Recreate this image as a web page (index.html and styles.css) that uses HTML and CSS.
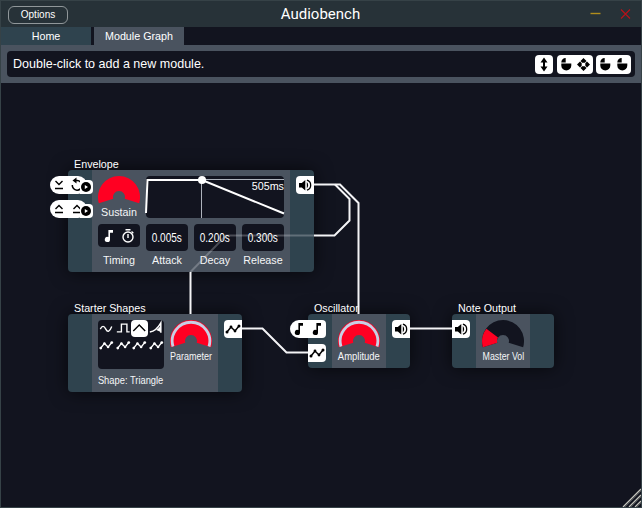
FILE: index.html
```html
<!DOCTYPE html>
<html lang="en">
<head>
<meta charset="utf-8">
<title>Audiobench</title>
<link rel="stylesheet" href="styles.css">
</head>
<body>
<svg class="defs" width="0" height="0">
  <defs>
    <symbol id="speaker" viewBox="0 0 18 18"><path d="M3 7h2.800L9.300 4v10.500L5.800 11.500H3z"/><path d="M10.800 6q2.800 3.200 0 6.400z"/><path d="M10.900 4.200a5.200 5.200 0 0 1 0 10" fill="none" stroke="currentColor" stroke-width="1.300"/></symbol>
    <symbol id="wave" viewBox="0 0 18 18"><path d="M3 12l4-5 4 4 4-5" fill="none" stroke="currentColor" stroke-width="1.500"/><circle cx="3" cy="12" r="1.500"/><circle cx="7" cy="7" r="1.400"/><circle cx="11" cy="11" r="1.400"/><circle cx="15" cy="6" r="1.500"/></symbol>
    <symbol id="note" viewBox="0 0 18 18"><path d="M8.400 3H13v2.700h-3v6.800a2.600 2.600 0 1 1-1.600-2.400z"/></symbol>
    <symbol id="mouse" viewBox="0 0 18 18"><path d="M4.300 8.500h10v2a5 5 0 0 1-10 0zM8.700 3v4.500H4.300A4.400 4.400 0 0 1 8.700 3z"/></symbol>
    <symbol id="play" viewBox="0 0 10 10"><circle cx="5" cy="5" r="5"/><path d="M3.800 2.900L7 5 3.800 7.100z" fill="#fff"/></symbol>
  </defs>
</svg>
<div class="window">
  <header class="titlebar">
    <button class="options">Options</button>
    <h1>Audiobench</h1>
    <svg class="controls" width="44" height="14" viewBox="0 0 44 14"><path d="M1.500 6.500h10" stroke="#b08d1c" stroke-width="1.400"/><path d="M32 2.500l9 9m0-9l-9 9" stroke="#b81219" stroke-width="1.100"/></svg>
  </header>
  <nav class="tabs"><div class="tab home">Home</div><div class="tab active">Module Graph</div></nav>
  <div class="hintbar">
    <div class="hint">
      <span>Double-click to add a new module.</span>
      <div class="keys">
        <div class="key"><svg width="18" height="19" viewBox="0 0 18 19"><path d="M9 2.500l3.500 5H10v4h2.500L9 16.500l-3.500-5H8v-4H5.500z"/></svg></div>
        <div class="key"><svg width="18" height="18"><use href="#mouse"/></svg><svg width="18" height="19" viewBox="0 0 18 19"><path d="M8.500 3l3 3-1.700 1.700H7.200L5.500 6zM8.500 16l3-3-1.700-1.700H7.200L5.500 13zM2 9.500l3-3 1.700 1.700v2.600L5 12.500zM15 9.500l-3-3-1.700 1.700v2.600l1.700 1.700z"/></svg></div>
        <div class="key"><svg width="17" height="18" viewBox="0 0 17 18"><use href="#mouse" width="18" height="18"/></svg><svg width="18" height="18"><use href="#mouse"/></svg></div>
      </div>
    </div>
  </div>
  <main class="canvas">
    <section class="node envelope">
      <h2>Envelope</h2>
      <div class="side"></div>
      <div class="body">
        <div class="top">
          <div class="control">
            <svg class="knob" width="42" height="28" viewBox="0 0 42 28"><path class="red" d="M.9 27.200A21 21 0 1 1 41.100 27.200L26.700 22.800A6 6 0 1 0 15.300 22.800z"/></svg>
            <span class="label">Sustain</span>
          </div>
          <div class="graph">
            <svg width="138" height="42" viewBox="0 0 138 42"><path d="M56 3.500h82M55.500 4v38" stroke="#aeb3bc"/><path d="M0 37L1.500 4H56l82 33.500" fill="none" stroke="#fff" stroke-width="2"/><circle cx="56" cy="4" r="4" fill="#fff"/></svg>
            <span class="duration">505ms</span>
          </div>
        </div>
        <div class="fields">
          <div class="field"><div class="box timing"><svg width="18" height="18"><use href="#note"/></svg><svg width="18" height="18" viewBox="0 0 18 18"><circle cx="9" cy="10" r="5" fill="none" stroke="currentColor" stroke-width="1.400"/><path d="M6.500 2h5v1.500h-5zM8.300 7h1.400v4H8.300zM13 4l1.800 1.700-1 1-1.700-1.700z"/></svg></div><span class="label">Timing</span></div>
          <div class="field"><div class="box"><span class="value">0.005s</span></div><span class="label">Attack</span></div>
          <div class="field"><div class="box"><span class="value">0.200s</span></div><span class="label">Decay</span></div>
          <div class="field"><div class="box"><span class="value">0.300s</span></div><span class="label">Release</span></div>
        </div>
      </div>
      <div class="side"><div class="port out"><svg width="18" height="18"><use href="#speaker"/></svg></div></div>
      <div class="inlet first">
        <svg width="18" height="18" viewBox="0 0 18 18"><path d="M5.500 5l3.500 3.500L12.500 5M5 12.500h8" fill="none" stroke="currentColor" stroke-width="1.400"/></svg>
        <svg width="18" height="18" viewBox="0 0 18 18"><path d="M4.300 9a4.800 4.800 0 1 0 4.700-4.400H7" fill="none" stroke="currentColor" stroke-width="1.500"/><path d="M4.500 4.600L8.500 1.600v6z"/></svg>
        <div class="trigger"><svg width="10" height="10"><use href="#play"/></svg></div>
      </div>
      <div class="inlet second">
        <svg width="18" height="18" viewBox="0 0 18 18"><path d="M5.500 9L9 5.500 12.500 9M5 12.500h8" fill="none" stroke="currentColor" stroke-width="1.400"/></svg>
        <svg width="18" height="18" viewBox="0 0 18 18"><path d="M5.500 9L9 5.500 12.500 9M5 12.500h8" fill="none" stroke="currentColor" stroke-width="1.400"/></svg>
        <div class="trigger"><svg width="10" height="10"><use href="#play"/></svg></div>
      </div>
    </section>

    <section class="node shapes">
      <h2>Starter Shapes</h2>
      <div class="side"></div>
      <div class="body row">
        <div class="picker-wrap">
          <div class="picker">
            <svg viewBox="0 0 18 18"><path d="M2.500 10q3-6 6 0t6.500-3" fill="none" stroke="currentColor" stroke-width="1.500"/></svg>
            <svg viewBox="0 0 18 18"><path d="M2 13h5V4.500h6V13h3" fill="none" stroke="currentColor" stroke-width="1.500"/></svg>
            <svg class="chosen" viewBox="0 0 18 18"><path d="M2.500 12L9 5.500l6.500 6.500" fill="none" stroke="currentColor" stroke-width="1.500"/></svg>
            <svg viewBox="0 0 18 18"><path d="M2 13.200q7-1 12-10V14" fill="none" stroke="currentColor" stroke-width="1.600"/><path d="M9 11q3-2 5-5v7z"/></svg>
            <svg viewBox="0 0 18 18"><use href="#wave"/></svg><svg viewBox="0 0 18 18"><use href="#wave"/></svg><svg viewBox="0 0 18 18"><use href="#wave"/></svg><svg viewBox="0 0 18 18"><use href="#wave"/></svg>
          </div>
          <span class="label caption">Shape: Triangle</span>
        </div>
        <div class="control">
          <svg class="knob" width="42" height="28" viewBox="0 0 42 28"><path class="red" d="M.9 27.200A21 21 0 1 1 41.100 27.200L26.700 22.800A6 6 0 1 0 15.300 22.800z"/><path class="arc" d="M3 26.500A18.800 18.800 0 1 1 39 26.500"/></svg>
          <span class="label parameter">Parameter</span>
        </div>
      </div>
      <div class="side"><div class="port out"><svg width="18" height="18"><use href="#wave"/></svg></div></div>
    </section>

    <section class="node oscillator">
      <h2>Oscillator</h2>
      <div class="side inputs">
        <div class="port notes"><svg width="18" height="18"><use href="#note"/></svg><svg width="18" height="18"><use href="#note"/></svg></div>
        <div class="port in"><svg width="18" height="18"><use href="#wave"/></svg></div>
      </div>
      <div class="body">
        <div class="control">
          <svg class="knob" width="42" height="28" viewBox="0 0 42 28"><path class="red" d="M.9 27.200A21 21 0 1 1 41.100 27.200L26.700 22.800A6 6 0 1 0 15.300 22.800z"/><path class="arc" d="M3 26.500A18.800 18.800 0 1 1 39 26.500"/></svg>
          <span class="label amplitude">Amplitude</span>
        </div>
      </div>
      <div class="side"><div class="port out"><svg width="18" height="18"><use href="#speaker"/></svg></div></div>
    </section>

    <section class="node output">
      <h2>Note Output</h2>
      <div class="side"><div class="port in"><svg width="18" height="18"><use href="#speaker"/></svg></div></div>
      <div class="body">
        <div class="control">
          <svg class="knob" width="42" height="28" viewBox="0 0 42 28"><path class="track" d="M.9 27.200A21 21 0 1 1 41.100 27.200L26.700 22.800A6 6 0 1 0 15.300 22.800z"/><path class="red" d="M.9 27.200A21 21 0 0 1 4.400 8.700L16 17.500A6 6 0 0 0 15.300 22.800z"/></svg>
          <span class="label volume">Master Vol</span>
        </div>
      </div>
      <div class="side"></div>
    </section>

    <svg class="wires" width="640" height="424" viewBox="1 83 640 424">
      <path d="M314 184.500H340L358.500 203V314"/>
      <path d="M335 184.500L349.500 199V220.500L334.500 235.500H314"/>
      <path class="faint" d="M314 235.500H226L190.500 272"/>
      <path d="M190.500 272V314"/>
      <path d="M242 328.500H262.500L286.500 352.500H308"/>
      <path d="M410 328.500H452"/>
    </svg>
    <svg class="grip" width="19" height="19" viewBox="0 0 19 19"><path d="M1 19L19 1M7 19L19 7M13 19l6-6" stroke="#c5c5be" stroke-width="1.300"/><path d="M3 19L19 3M9 19L19 9M15 19l4-4" stroke="#4a4d50" stroke-width="1"/></svg>
  </main>
</div>
</body>
</html>
```
FILE: styles.css
```css
* { box-sizing: border-box; }
body {
  margin: 0;
  background: #12141f;
  color: #fff;
  font: 10.74px/12px "Liberation Sans", Arial, sans-serif;
}
svg { display: block; flex: none; fill: currentColor; }
.defs { position: absolute; }
.window {
  width: 642px;
  height: 508px;
  border: 1px solid #364247;
  display: flex;
  flex-direction: column;
  overflow: hidden;
}
.titlebar {
  height: 26px;
  flex: none;
  display: grid;
  grid-template-columns: 1fr auto 1fr;
  align-items: center;
  padding: 0 8px 0 7px;
  background: #273238;
}
.options {
  width: 60px;
  height: 18px;
  margin-top: 2px;
  padding: 0;
  border: 1px solid #90979a;
  border-radius: 6px;
  background: transparent;
  color: #fff;
  font: 10px/12px "Liberation Sans", Arial, sans-serif;
}
h1 { margin: 0; font: 15px/18px Roboto, sans-serif; }
.controls { justify-self: end; }
.tabs { display: flex; gap: 3px; height: 18px; flex: none; }
.tab { width: 90px; line-height: 19px; text-align: center; }
.home { background: #2f434e; }
.active { background: #4a535f; }
.hintbar { height: 38px; flex: none; padding: 6px; background: #4a535f; }
.hint {
  height: 26px;
  padding: 0 4px 0 6px;
  display: flex;
  align-items: center;
  justify-content: space-between;
  border-radius: 4px;
  background: #12141f;
  font-size: 12.53px;
}
.keys { display: flex; gap: 3.5px; }
.key { display: flex; height: 19px; border-radius: 4px; background: #fff; color: #000; }
.canvas { position: relative; flex: 1; overflow: hidden; }
.node {
  position: absolute;
  display: flex;
  border-radius: 4px;
  background: #2f434e;
  box-shadow: 0 0 18px rgba(0, 0, 0, .65);
}
.envelope { left: 67px; top: 87px; width: 246px; height: 102px; }
.shapes { left: 67px; top: 231px; width: 174px; height: 78px; }
.oscillator { left: 307px; top: 231px; width: 102px; height: 54px; }
.output { left: 451px; top: 231px; width: 102px; height: 54px; }
h2 { position: absolute; left: 6px; top: -12px; margin: 0; font: inherit; white-space: nowrap; }
.side { width: 24px; flex: none; padding-top: 6px; display: flex; flex-direction: column; gap: 6px; }
.body { flex: 1; padding: 6px; background: #4a535f; min-width: 0; }
.row { display: flex; gap: 6px; }
.top { display: flex; gap: 6px; height: 42px; }
.control { width: 42px; display: flex; flex-direction: column; align-items: center; gap: 2px; }
.label { white-space: nowrap; color: #f5f6f7; }
.red { fill: #ff0022; }
.track { fill: #12141f; }
.arc { fill: none; stroke: #c8cfe4; stroke-width: 2.8; }
.graph { position: relative; width: 138px; height: 42px; border-radius: 4px; background: #12141f; }
.graph svg { overflow: visible; }
.duration { position: absolute; right: 0; top: 4px; }
.fields { display: flex; gap: 6px; margin-top: 6px; }
.field { width: 42px; display: flex; flex-direction: column; align-items: center; justify-content: space-between; height: 42px; }
.box { width: 42px; height: 27px; display: flex; align-items: center; justify-content: center; border-radius: 4px; background: #12141f; }
.timing { height: 23px; gap: 1px; padding-right: 1px; }
.value { font-size: 12.53px; transform: scaleX(.8); }
.port { width: 18px; height: 18px; display: flex; background: #fff; color: #000; }
.out { align-self: flex-end; border-radius: 4px 0 0 4px; }
.in { border-radius: 0 4px 4px 0; }
.notes { width: 36px; margin-left: -18px; border-radius: 9px 4px 4px 9px; }
.inlet {
  position: absolute;
  left: -18px;
  width: 37px;
  height: 18px;
  display: flex;
  border-radius: 9px;
  background: #fff;
  color: #000;
}
.first { top: 6px; }
.second { top: 30px; }
.trigger { position: absolute; left: 30px; top: 4px; padding: 2px 2px 2px 1px; border-radius: 0 4px 4px 0; background: #fff; }
.picker-wrap { width: 66px; display: flex; flex-direction: column; gap: 5px; align-items: center; }
.picker {
  width: 66px;
  height: 49px;
  display: grid;
  grid-template: 16.5px 16.5px / repeat(4, 16.5px);
  border-radius: 4px;
  background: #12141f;
}
.picker svg { width: 16.5px; height: 16.5px; }
.picker .chosen { border-radius: 4px; background: #fff; color: #000; }
.caption { transform: scaleX(.87); }
.parameter { transform: scaleX(.838); }
.amplitude { transform: scaleX(.88); }
.volume { transform: scaleX(.82); }
.wires { position: absolute; left: 0; top: 0; fill: none; stroke: #f4f4f6; stroke-width: 2; pointer-events: none; }
.faint { opacity: .25; }
.grip { position: absolute; right: 0; bottom: 0; }
```
